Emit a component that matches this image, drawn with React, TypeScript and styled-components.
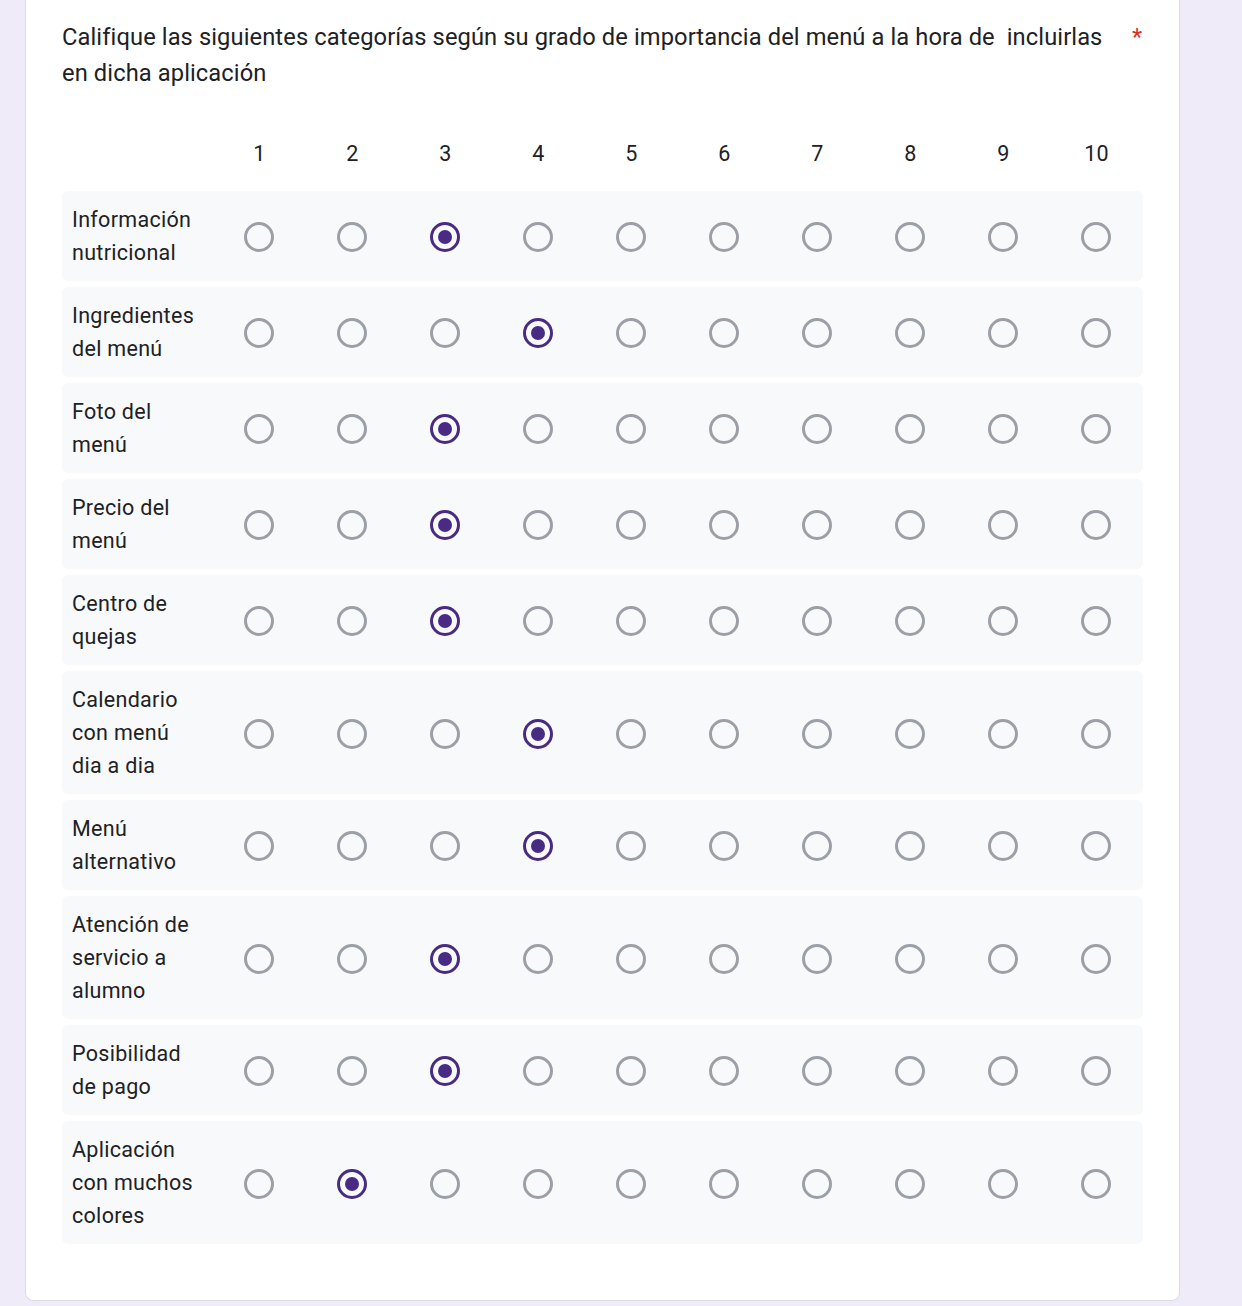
import React from "react";
import styled, { createGlobalStyle } from "styled-components";

const GlobalStyle = createGlobalStyle`
  html, body {
    margin: 0;
    padding: 0;
    background: #f0ebf8;
  }
  body {
    font-family: Roboto, "Liberation Sans", Arial, sans-serif;
    color: #202124;
  }
`;

const Page = styled.div`
  min-height: 1306px;
  padding: 0 62px 0 25px;
  box-sizing: border-box;
`;

const Card = styled.div`
  width: 1155px;
  box-sizing: border-box;
  background: #ffffff;
  border: 1px solid #dadce0;
  border-top: none;
  border-radius: 0 0 8px 8px;
  padding: 19px 36px 56px 36px;
`;

const TitleRow = styled.div`
  display: flex;
  align-items: flex-start;
  margin-bottom: 45px;
`;

const TitleText = styled.div`
  flex: 1;
  font-size: 23.7px;
  line-height: 36px;
  letter-spacing: 0.1px;
  color: #202124;
`;

const Required = styled.span`
  color: #d93025;
  font-size: 23.5px;
  line-height: 36px;
  padding-left: 16px;
  padding-right: 1px;
`;

const Grid = styled.div`
  display: flex;
  flex-direction: column;
  gap: 6px;
`;

const GridRow = styled.div<{ $header?: boolean }>`
  display: grid;
  grid-template-columns: 151px repeat(10, 93px);
  align-items: center;
  border-radius: 6px;
  background: ${(p) => (p.$header ? "transparent" : "#f8f9fa")};
  padding: ${(p) => (p.$header ? "1px 0 0 0" : "12px 0")};
  margin-bottom: ${(p) => (p.$header ? "14px" : "0")};
`;

const ColHead = styled.div`
  text-align: center;
  font-size: 21.5px;
  line-height: 34px;
  letter-spacing: 0.2px;
  color: #202124;
`;

const RowLabel = styled.div`
  font-size: 21.5px;
  line-height: 33px;
  letter-spacing: 0.3px;
  padding: 0 14px 0 10px;
  color: #202124;
`;

const Cell = styled.div`
  display: flex;
  justify-content: center;
  align-items: center;
  padding: 2px 1px 0 0;
`;

const Radio = styled.div<{ $checked?: boolean }>`
  width: 30px;
  height: 30px;
  box-sizing: border-box;
  border-radius: 50%;
  border: 3px solid ${(p) => (p.$checked ? "#472b84" : "#9aa0a6")};
  display: flex;
  align-items: center;
  justify-content: center;

  &::after {
    content: "";
    display: ${(p) => (p.$checked ? "block" : "none")};
    width: 14px;
    height: 14px;
    border-radius: 50%;
    background: #472b84;
  }
`;

const rows: { label: string; value: number }[] = [
  { label: "Información nutricional", value: 3 },
  { label: "Ingredientes del menú", value: 4 },
  { label: "Foto del menú", value: 3 },
  { label: "Precio del menú", value: 3 },
  { label: "Centro de quejas", value: 3 },
  { label: "Calendario con menú dia a dia", value: 4 },
  { label: "Menú alternativo", value: 4 },
  { label: "Atención de servicio a alumno", value: 3 },
  { label: "Posibilidad de pago", value: 3 },
  { label: "Aplicación con muchos colores", value: 2 },
];

const cols = [1, 2, 3, 4, 5, 6, 7, 8, 9, 10];

export default function App() {
  return (
    <>
      <GlobalStyle />
      <Page>
        <Card>
          <TitleRow>
            <TitleText>
              Califique las siguientes categorías según su grado de importancia del menú a la hora de&nbsp; incluirlas en dicha aplicación
            </TitleText>
            <Required>*</Required>
          </TitleRow>
          <Grid>
            <GridRow $header>
              <div />
              {cols.map((c) => (
                <ColHead key={c}>{c}</ColHead>
              ))}
            </GridRow>
            {rows.map((r) => (
              <GridRow key={r.label}>
                <RowLabel>{r.label}</RowLabel>
                {cols.map((c) => (
                  <Cell key={c}>
                    <Radio $checked={r.value === c} />
                  </Cell>
                ))}
              </GridRow>
            ))}
          </Grid>
        </Card>
      </Page>
    </>
  );
}
